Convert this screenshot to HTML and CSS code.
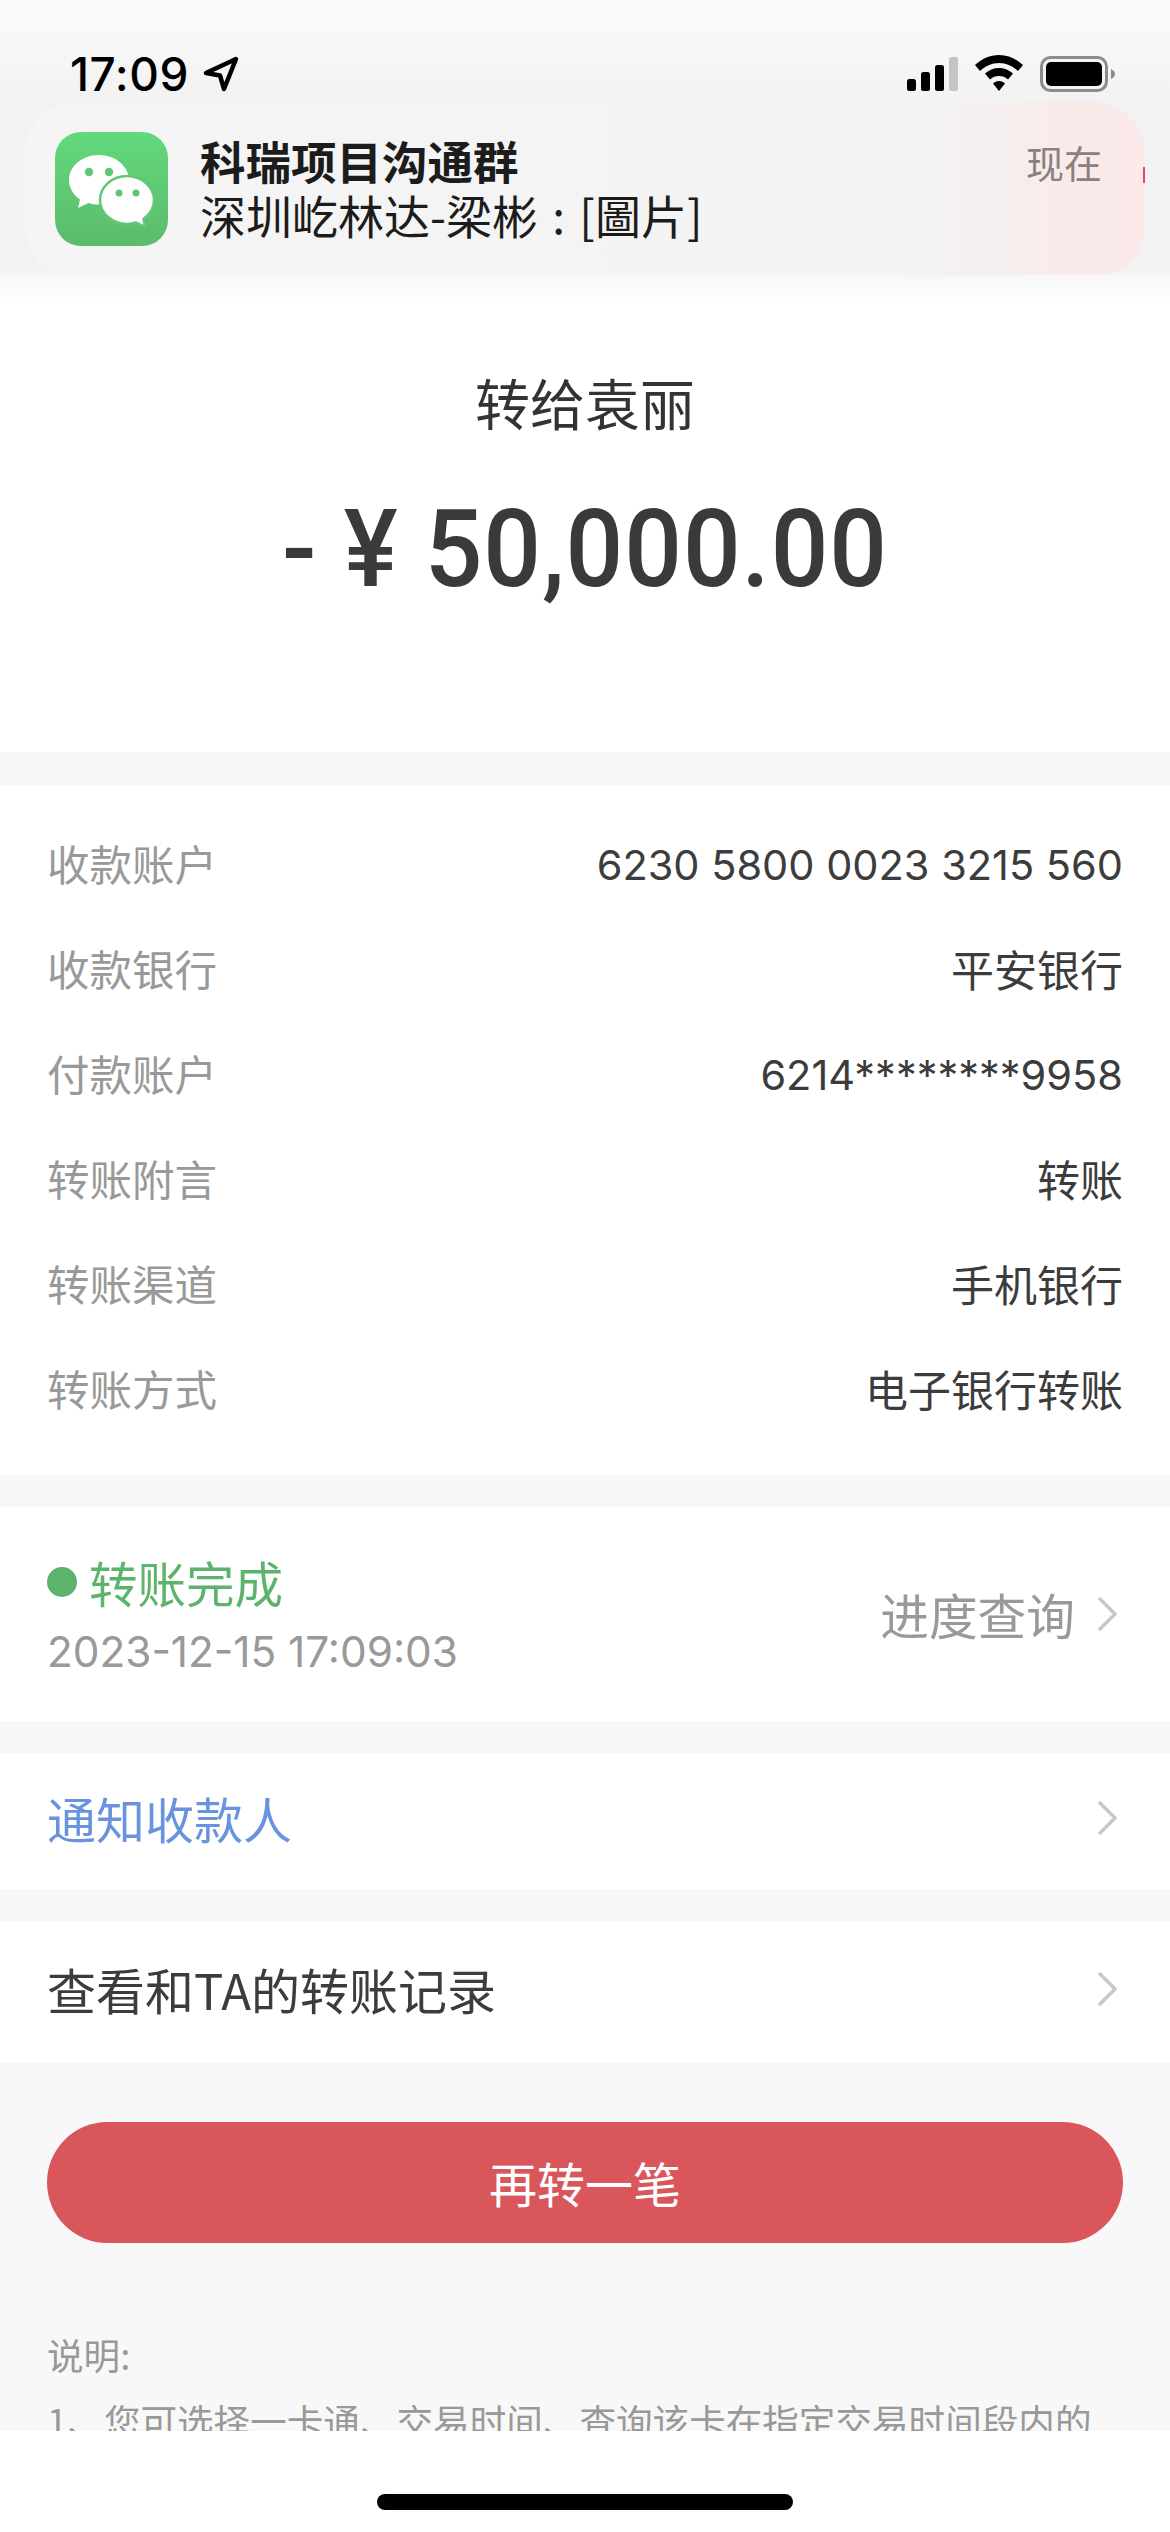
FILE: index.html
```html
<!DOCTYPE html>
<html lang="zh-CN">
<head>
    <meta charset="UTF-8">
    <meta name="viewport" content="width=device-width, initial-scale=1.0">
    <title>转账详情</title>
    <link rel="stylesheet" href="styles.css">
</head>
<body>
    <div class="page">
        <!-- Barra de estado y notificación -->
        <header class="top">
            <div class="status-bar">
                <div class="clock">
                    <span>17:09</span>
                    <svg class="arrow" viewBox="0 0 36 36"><path d="M33 3 3 17l14 2.5L21 33z" fill="none" stroke="#000" stroke-width="4.5" stroke-linejoin="round"/></svg>
                </div>
                <div class="status-icons">
                    <svg class="signal" viewBox="0 0 51 34">
                        <rect x="0" y="22" width="9" height="12" rx="2.5"/>
                        <rect x="14" y="15" width="9" height="19" rx="2.5"/>
                        <rect x="28" y="8" width="9" height="26" rx="2.5"/>
                        <rect x="42" y="0" width="9" height="34" rx="2.5" fill="#c4c4c4"/>
                    </svg>
                    <svg class="wifi" viewBox="0 0 48 36">
                        <path d="M24 0C15 0 7 3.500 0 10l5 6c5-5 12-8 19-8s14 3 19 8l5-6C41 3.500 33 0 24 0z"/>
                        <path d="M24 13c-5.500 0-10 2-14 5.500l5 6c2.500-2.500 5.500-3.500 9-3.500s6.500 1 9 3.500l5-6C34 15 29.500 13 24 13z"/>
                        <path d="M24 26c-2.500 0-4.500 1-6 2.500l6 7.500 6-7.500c-1.500-1.500-3.500-2.500-6-2.500z"/>
                    </svg>
                    <svg class="battery" viewBox="0 0 75 36">
                        <rect x="1.500" y="1.500" width="65" height="33" rx="9" fill="none" stroke="#8c8c8c" stroke-width="3"/>
                        <rect x="6" y="6" width="56" height="24" rx="5"/>
                        <path d="M71 13c2.500 1 4 3 4 5s-1.500 4-4 5z" fill="#8c8c8c"/>
                    </svg>
                </div>
            </div>
            <div class="banner">
                <svg class="app-icon" viewBox="0 0 113 114">
                    <defs>
                        <linearGradient id="verde" x1="0" y1="0" x2="0" y2="1">
                            <stop offset="0" stop-color="#62d97c"/>
                            <stop offset="1" stop-color="#5cbb6c"/>
                        </linearGradient>
                    </defs>
                    <rect width="113" height="114" rx="26" fill="url(#verde)"/>
                    <path d="M44 23c-16.500 0-30 11-30 25 0 8 4.500 15 11 19.500L23 76l10.500-5c3.300 1 6.800 1.500 10.500 1.500 16.500 0 30-11 30-24.500S60.500 23 44 23z" fill="#fff"/>
                    <path d="M72 44c-14.500 0-27 10.500-27 24s12.500 24 27 24c3.200 0 6.400-.500 9.300-1.500L90 95l-1.500-8C94.500 82.500 99 75.500 99 68c0-13.500-12.500-24-27-24z" fill="#fff" stroke="#62c878" stroke-width="2.500"/>
                    <circle cx="34" cy="40" r="4.200" fill="#5fc673"/>
                    <circle cx="54" cy="40" r="4.200" fill="#5fc673"/>
                    <circle cx="64" cy="61" r="3.500" fill="#5fc673"/>
                    <circle cx="81" cy="61" r="3.500" fill="#5fc673"/>
                </svg>
                <div class="banner-text">
                    <div class="banner-title">科瑞项目沟通群</div>
                    <div class="banner-sub">深圳屹林达-梁彬 : [圖片]</div>
                </div>
                <div class="banner-time">现在</div>
            </div>
        </header>

        <div class="content">
            <!-- Importe -->
            <section class="card summary">
                <div class="payee">转给袁丽</div>
                <div class="amount">- ¥ 50,000.00</div>
            </section>

            <!-- Datos de la transferencia -->
            <section class="card details">
                <div class="row"><span class="label">收款账户</span><span class="value num">6230 5800 0023 3215 560</span></div>
                <div class="row"><span class="label">收款银行</span><span class="value">平安银行</span></div>
                <div class="row"><span class="label">付款账户</span><span class="value num">6214********9958</span></div>
                <div class="row"><span class="label">转账附言</span><span class="value">转账</span></div>
                <div class="row"><span class="label">转账渠道</span><span class="value">手机银行</span></div>
                <div class="row"><span class="label">转账方式</span><span class="value">电子银行转账</span></div>
            </section>

            <section class="card progress">
                <div>
                    <div class="done"><i class="dot"></i>转账完成</div>
                    <div class="done-time">2023-12-15 17:09:03</div>
                </div>
                <div class="progress-link">
                    <span>进度查询</span>
                    <svg class="chevron" viewBox="0 0 20 34"><path d="M2 1l16 16L2 33"/></svg>
                </div>
            </section>

            <section class="card link-row notify">
                <span>通知收款人</span>
                <svg class="chevron" viewBox="0 0 20 34"><path d="M2 1l16 16L2 33"/></svg>
            </section>

            <section class="card link-row history">
                <span>查看和TA的转账记录</span>
                <svg class="chevron" viewBox="0 0 20 34"><path d="M2 1l16 16L2 33"/></svg>
            </section>

            <button class="again">再转一笔</button>

            <div class="notes">
                <p>说明:</p>
                <p>1、您可选择一卡通、交易时间、查询该卡在指定交易时间段内的</p>
            </div>
        </div>

        <div class="home-area"><div class="home-bar"></div></div>
    </div>
</body>
</html>
```

FILE: styles.css
```css
* {
    box-sizing: border-box;
}

body {
    margin: 0;
    font-family: "Noto Sans CJK SC", sans-serif;
    background-color: #fff;
    color: #333;
}

.page {
    width: 1170px;
    height: 2532px;
    display: flex;
    flex-direction: column;
    overflow: hidden;
}

/* top */
.top {
    height: 300px;
    flex-shrink: 0;
    padding: 0 25px;
    background: linear-gradient(#fafafa 0, #f6f6f6 60px, #f2f2f2 100px, #f2f2f2 272px, #f7f7f7 275px, #fff 300px);
}

.status-bar {
    height: 102px;
    padding: 54px 30px 0 45px;
    display: flex;
    justify-content: space-between;
}

.clock {
    display: flex;
    gap: 14px;
    height: 40px;
    align-items: center;
    font-family: Inter, sans-serif;
    font-size: 46px;
    font-weight: 500;
    letter-spacing: 0.5px;
    color: #000;
}

.arrow {
    width: 36px;
    height: 36px;
}

.status-icons {
    display: flex;
    gap: 17px;
    align-items: flex-start;
}

.signal {
    width: 51px;
    height: 34px;
    margin-top: 3px;
}

.wifi {
    width: 48px;
    height: 36px;
    margin-top: 1px;
}

.battery {
    width: 75px;
    height: 36px;
    margin-top: 2px;
}

.banner {
    position: relative;
    height: 173px;
    display: flex;
    align-items: flex-start;
    padding: 30px 43px 0 30px;
    border-radius: 52px 52px 46px 46px;
    background: linear-gradient(90deg, #f5f5f5 0, #f3f3f3 78%, #f5efef 86%, #f9eaea 93%, #fce9e9 100%);
}

/* the sliver of red at the banner's right edge */
.banner::after {
    content: "";
    position: absolute;
    right: 0;
    top: 65px;
    width: 2px;
    height: 16px;
    background-color: #e8455a;
}

.app-icon {
    width: 113px;
    height: 114px;
    flex-shrink: 0;
}

.banner-text {
    flex: 1;
    margin-left: 32px;
    color: #1c1c1c;
}

.banner-title {
    font-size: 45.5px;
    font-weight: 700;
    line-height: 56px;
}

.banner-sub {
    font-size: 46px;
    line-height: 52px;
    font-weight: 400;
    word-spacing: 4px;
    white-space: nowrap;
}

.banner-time {
    font-size: 38px;
    line-height: 60px;
    color: #8a8080;
}

/* content */
.content {
    flex: 1;
    min-height: 0;
    overflow: hidden;
    background-color: #f8f8f8;
}

.card {
    background-color: #fff;
    margin-bottom: 32px;
}

.summary {
    height: 452px;
    padding-top: 63px;
    text-align: center;
    margin-bottom: 33px;
}

.payee {
    font-size: 55px;
    line-height: 76px;
}

.amount {
    margin-top: 50px;
    font-family: Roboto, sans-serif;
    font-size: 108px;
    line-height: 120px;
    font-weight: 500;
    letter-spacing: 1px;
    color: #3a3a3a;
    transform: scaleX(0.94);
}

.details {
    height: 690px;
    padding: 25px 47px 0;
}

.row {
    height: 105px;
    display: flex;
    justify-content: space-between;
    align-items: center;
    font-size: 42.5px;
}

.label {
    color: #999;
}

.value {
    font-size: 43px;
    color: #3c3c3c;
}

.num {
    padding-top: 5px;
    font-family: Inter, sans-serif;
    font-size: 41.5px;
}

.progress {
    height: 214px;
    padding: 0 53px 0 47px;
    display: flex;
    justify-content: space-between;
    align-items: center;
}

.done {
    display: flex;
    align-items: center;
    font-size: 48.5px;
    line-height: 60px;
    color: #5cb46c;
}

.dot {
    width: 30px;
    height: 30px;
    margin-right: 12px;
    border-radius: 50%;
    background-color: #5cb46c;
}

.done-time {
    margin-top: 15px;
    font-family: Inter, sans-serif;
    font-size: 42.3px;
    line-height: 50px;
    color: #999;
}

.progress-link {
    display: flex;
    align-items: center;
    gap: 22px;
    font-size: 48.7px;
    color: #999;
}

.chevron {
    width: 20px;
    height: 34px;
    fill: none;
    stroke: #c8c8c8;
    stroke-width: 3.5;
}

.link-row {
    padding: 0 53px 7px 47px;
    display: flex;
    justify-content: space-between;
    align-items: center;
    font-size: 49px;
}

.notify {
    height: 136px;
    color: #6a93de;
}

.history {
    height: 142px;
    margin-bottom: 59px;
    color: #3c3c3c;
}

.again {
    display: block;
    width: 1076px;
    height: 121px;
    margin: 0 47px;
    padding-bottom: 3px;
    border: 0;
    border-radius: 61px;
    background-color: #d9565b;
    color: #fff;
    font-family: inherit;
    font-size: 48px;
}

.notes {
    margin-top: 86px;
    padding: 0 47px;
    font-size: 36.6px;
    color: #999;
}

.notes p {
    margin: 0 0 14px;
    line-height: 52px;
    white-space: nowrap;
}

/* home */
.home-area {
    height: 101px;
    flex-shrink: 0;
    background-color: #fff;
    padding: 63px 0 0 377px;
}

.home-bar {
    width: 416px;
    height: 16px;
    border-radius: 8px;
    background-color: #000;
}
```
